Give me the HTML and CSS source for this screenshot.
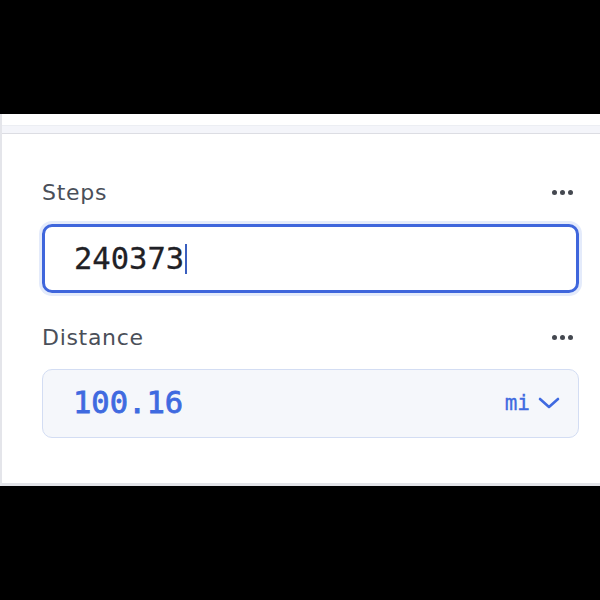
FILE: index.html
```html
<!DOCTYPE html>
<html lang="en">
<head>
    <meta charset="UTF-8">
    <meta name="viewport" content="width=device-width, initial-scale=1.0">
    <title>Steps to Distance</title>
    <link rel="stylesheet" href="styles.css">
</head>
<body>
    <div class="panel">
        <div class="panel-top"></div>
        <div class="panel-bar"></div>
        <div class="card">
            <div class="field">
                <div class="field-head">
                    <span class="label">Steps</span>
                    <span class="more"><i></i><i></i><i></i></span>
                </div>
                <div class="box box-active">
                    <span class="value">240373</span><span class="caret"></span>
                </div>
            </div>
            <div class="field">
                <div class="field-head">
                    <span class="label">Distance</span>
                    <span class="more"><i></i><i></i><i></i></span>
                </div>
                <div class="box box-result">
                    <span class="value">100.16</span>
                    <span class="unit">mi
                        <svg width="22" height="14" viewBox="0 0 22 14"><path d="M2 3 L11 11 L20 3" fill="none" stroke="currentColor" stroke-width="2.6" stroke-linecap="round" stroke-linejoin="round"/></svg>
                    </span>
                </div>
            </div>
        </div>
    </div>
</body>
</html>
```

FILE: styles.css
```css
body {
    margin: 0;
    padding-top: 114px;
    background: #000;
    font-family: "DejaVu Sans", "Noto Sans", sans-serif;
}
.panel {
    background: #fff;
    border-left: 2px solid #e4e5ea;
}
.panel-top {
    height: 11px;
}
.panel-bar {
    height: 7px;
    background: #f4f5fa;
    border-top: 1px solid #eceef3;
    border-bottom: 1px solid #dcdde3;
}
.card {
    padding: 44px 21px 45px 40px;
    border-bottom: 3px solid #e2e3e8;
}
.field + .field {
    margin-top: 30px;
}
.field-head {
    display: flex;
    justify-content: space-between;
    align-items: center;
    height: 28px;
    margin-bottom: 18px;
}
.label {
    font-size: 22px;
    letter-spacing: 0.7px;
    color: #4a4f59;
}
.more {
    display: flex;
    gap: 3px;
    margin-right: 6px;
}
.more i {
    width: 5px;
    height: 5px;
    border-radius: 50%;
    background: #444850;
}
.box {
    display: flex;
    align-items: center;
    height: 69px;
    box-sizing: border-box;
    border-radius: 10px;
    font-family: "DejaVu Sans Mono", monospace;
}
.box-active {
    border: 3px solid #3f66dc;
    box-shadow: 0 0 0 3px #e4ebfb;
    padding-left: 29px;
}
.box-active .value {
    font-size: 30.5px;
    color: #1f2126;
    -webkit-text-stroke: 0.3px #1f2126;
}
.caret {
    width: 2px;
    height: 30px;
    background: #3a5fbf;
    margin-left: 1px;
}
.box-result {
    background: #f5f7fb;
    border: 1.5px solid #d3ddf3;
    padding: 0 18px 2px 30px;
    justify-content: space-between;
}
.box-result .value {
    font-size: 30.5px;
    color: #3f6ae0;
    -webkit-text-stroke: 0.8px #3f6ae0;
}
.unit {
    display: flex;
    align-items: center;
    gap: 8px;
    font-size: 21px;
    color: #3f6ae0;
    -webkit-text-stroke: 0.3px #3f6ae0;
}
```
